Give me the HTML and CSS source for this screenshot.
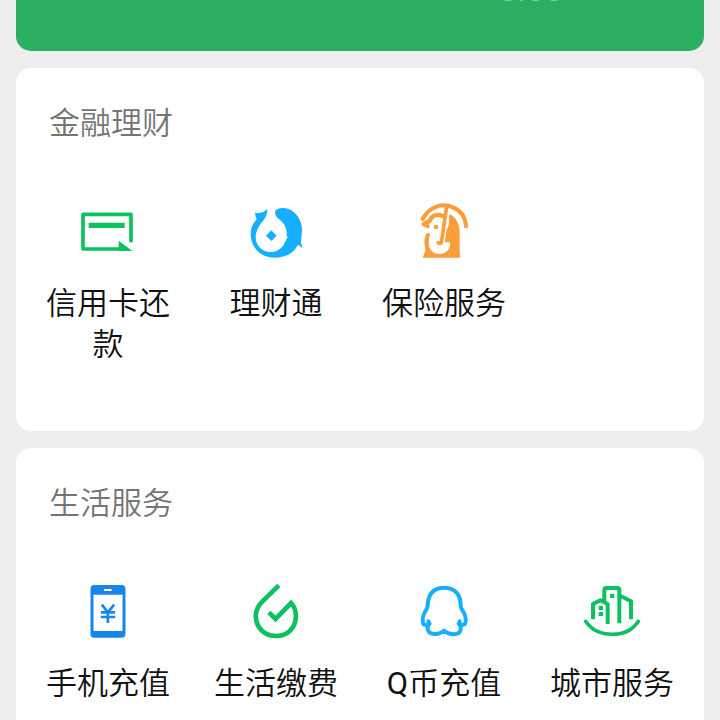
FILE: index.html
```html
<!DOCTYPE html>
<html lang="zh-CN">
<head>
<meta charset="utf-8">
<title>服务</title>
<link rel="stylesheet" href="styles.css">
</head>
<body>
<main class="page">
  <section class="wallet"><span class="balance">0.00</span></section>

  <section class="card finance">
    <h2 class="title">金融理财</h2>
    <div class="grid">
      <div class="item">
        <svg class="icon green" viewBox="4 0 225 225">
          <path class="line" stroke-width="11" stroke-linejoin="round" d="M184 142V58H40V162H155"/>
          <path class="solid" d="M57 83H165V99H57ZM147 137L188 168H147Z"/>
        </svg>
        <span class="label">信用卡还款</span>
      </div>
      <div class="item">
        <svg class="icon sky" viewBox="-3 0 225 225">
          <path class="solid" d="M81 42C73 51 60 56 44 53L50 74C29 91 26 129 43 156C64 190 112 198 150 176C162 168 169 158 174 149L187 159L183 143L186 105C186 79 171 53 148 43C131 36 110 39 106 48C103 58 109 67 120 75C135 87 142 104 140 125L144 124L137 137C129 158 113 171 91 171C66 171 47 151 47 126C47 111 54 97 62 86C73 75 81 60 82 48Z"/>
          <path class="solid" d="M94 106L110 122L94 138L78 122Z"/>
        </svg>
        <span class="label">理财通</span>
      </div>
      <div class="item">
        <svg class="icon orange" viewBox="0 0 225 225">
          <path class="line" stroke-width="12" stroke-linecap="round" d="M47 72C67 34 107 22 138 37C164 48 176 71 177 94"/>
          <path class="line" stroke-width="11" stroke-linecap="round" d="M119 34L104 137Q102 150 93 143"/>
          <path class="line" stroke-width="13" stroke-linecap="round" stroke-linejoin="round" d="M106 62C88 55 74 63 68 78L50 87L62 93"/>
          <path class="solid" d="M129 58C149 68 158 89 158 114V170L160 188H47L54 170C56 165 54 158 53 150C51 137 53 124 58 116Q64 110 69 119C65 133 63 151 70 163Q77 176 95 177C119 177 131 161 129 142H113L119 103C127 93 127 77 126 64Z"/>
          <circle class="solid" cx="87" cy="96" r="7"/>
        </svg>
        <span class="label">保险服务</span>
      </div>
    </div>
  </section>

  <section class="card life">
    <h2 class="title">生活服务</h2>
    <div class="grid">
      <div class="item">
        <svg class="icon blue" viewBox="3.5 0 225 225">
          <path class="solid" fill-rule="evenodd" d="M73 30H155Q167 30 167 42V176Q167 188 155 188H73Q62 188 62 176V42Q62 30 73 30ZM71 59V168H158V59ZM105 42Q102 42 102 45T105 48H123Q126 48 126 45T123 42Z"/>
          <path class="line" stroke-width="8" d="M96 89L114 112L133 89M114 110V144M93 112H136M93 126H136"/>
        </svg>
        <span class="label">手机充值</span>
      </div>
      <div class="item">
        <svg class="icon green" viewBox="-3.5 0 225 225">
          <path class="line" stroke-width="14" d="M116 31L67 79C52 94 46 108 47 126C49 160 74 183 108 183C143 183 167 158 167 123C167 105 162 94 153 84L106 132L86 112"/>
        </svg>
        <span class="label">生活缴费</span>
      </div>
      <div class="item">
        <svg class="icon sky" viewBox="0 0 225 225">
          <path class="line" stroke-width="12" stroke-linecap="round" stroke-linejoin="round" d="M64 139L68 147C58 150 51 151 49 147C45 136 48 118 58 104C64 95 61 91 63 79C68 52 85 38 111 38C138 38 156 54 160 79C162 91 159 95 165 104C175 118 179 136 174 147C171 151 163 149 155 146L158 139M68 147C60 153 59 165 68 173C80 181 101 177 111 167C123 177 142 181 155 174C164 166 163 153 155 146"/>
        </svg>
        <span class="label"><span class="latin">Q</span>币充值</span>
      </div>
      <div class="item">
        <svg class="icon green" viewBox="0 0 225 225">
          <path class="line" stroke-width="12" stroke-linejoin="round" d="M54 133V87L76 76L98 87V147M88 77V45Q88 39 94 39H127Q133 39 133 45V145M135 62L168 79V133"/>
          <path class="line" stroke-width="11" stroke-linecap="round" d="M32 139C50 166 78 178 112 178C146 178 173 166 190 139"/>
          <path class="solid" d="M105 56H118V69H105ZM71 93H84V105H71ZM71 111H84V123H71Z"/>
        </svg>
        <span class="label">城市服务</span>
      </div>
    </div>
  </section>
</main>
</body>
</html>
```
FILE: styles.css
```css
* { box-sizing: border-box; }

body {
  margin: 0;
  background: #eee;
  font-family: Roboto, "Noto Sans CJK SC", sans-serif;
  color: #111;
}

.page {
  height: 720px;
  overflow: hidden;
  padding: 0 16px;
  display: flex;
  flex-direction: column;
  gap: 17px;
}

.wallet {
  position: relative;
  flex: 0 0 51px;
  background: #2aae62;
  border-radius: 0 0 15px 15px;
}

.balance {
  position: absolute;
  right: 141px;
  top: -30px;
  font-size: 33px;
  line-height: 40px;
  color: #7fcea4;
}

.card {
  flex: none;
  height: 363px;
  padding: 35px 8px 0;
  background: #fff;
  border-radius: 15px;
}

.title {
  margin: 0 0 50px;
  padding-left: 25px;
  font-size: 31px;
  line-height: 42px;
  font-weight: 350;
  color: #757575;
}

.grid {
  display: grid;
  grid-template-columns: repeat(4, 168px);
}

.item {
  display: flex;
  flex-direction: column;
  align-items: center;
}

.icon {
  width: 75px;
  height: 75px;
  display: block;
}

.label {
  width: 126px;
  margin-top: 13px;
  font-size: 31px;
  line-height: 41px;
  font-weight: 350;
  text-align: center;
}

.latin { font-weight: 400; }

.line { fill: none; stroke: currentColor; }
.solid { fill: currentColor; }
.green { color: #0cc160; }
.sky { color: #16aeff; }
.blue { color: #1687e8; }
.orange { color: #fa9d3b; }
```
